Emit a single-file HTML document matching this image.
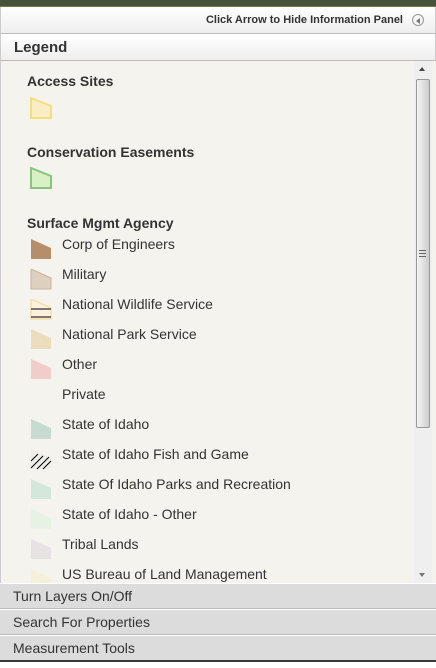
<!DOCTYPE html><html><head><style>
*{margin:0;padding:0;box-sizing:border-box}
body{width:436px;height:668px;overflow:hidden;background:#f4f3ed;font-family:"Liberation Sans",Arial,sans-serif;position:relative}
.top{position:absolute;left:0;top:0;width:436px;height:7px;background:#48513a;border-bottom:1px solid #6d7a55}
.hdr{position:absolute;left:0;top:7px;width:436px;height:27px;background:linear-gradient(#fff,#eee);border-bottom:1px solid #bbb;border-left:1px solid #ccc;border-right:1px solid #ccc}
.hdr span{position:absolute;right:32px;top:7px;font-size:11px;font-weight:bold;color:#333}
.hdr i{position:absolute;right:11px;top:7px;width:12px;height:12px;border:1px solid #999;border-radius:50%;background:#f6f6f6}
.hdr i:after{content:"";position:absolute;left:3px;top:2.5px;border-right:4px solid #777;border-top:3px solid transparent;border-bottom:3px solid transparent}
.leg{position:absolute;left:0;top:34px;width:436px;height:27px;background:linear-gradient(#fff,#eee);border-bottom:1px solid #bbb;border-left:1px solid #ccc;border-right:1px solid #ccc}
.leg span{position:absolute;left:13px;top:5px;font-size:15px;font-weight:bold;color:#333}
.cont{position:absolute;left:0;top:61px;width:432px;height:522px;border-left:1px solid #ccc}
h3{position:absolute;left:27px;font-size:14px;font-weight:bold;color:#333}
.it{position:absolute;left:62px;font-size:14px;color:#333}
svg.ic{position:absolute;left:30px}
.sb{position:absolute;left:414px;top:61px;width:18px;height:522px;background:#efefef}
.th{position:absolute;left:416px;top:79px;width:14px;height:349px;border:1px solid #999;border-radius:2px;background:linear-gradient(90deg,#f4f4f4,#ddd 60%,#ccc)}
.bt{position:absolute;left:0;width:436px;height:26px;background:#dcdcdc;border-top:1px solid #fff;border-bottom:1px solid #bbb;font-size:14px;color:#333;padding:4px 0 0 13px}
.bot{position:absolute;left:0;top:660px;width:436px;height:2px;background:#3a3a3a}
.wh{position:absolute;left:0;top:662px;width:436px;height:6px;background:#fff}
</style></head><body>
<div class="top"></div>
<div class="hdr"><span>Click Arrow to Hide Information Panel</span><i></i></div>
<div class="leg"><span>Legend</span></div>
<div class="cont"></div>
<h3 style="top:73px">Access Sites</h3>
<svg class="ic" style="top:97px" width="23" height="22"><polygon points="1,1 21,9 21,21 1,21" fill="#f8edc4" stroke="#f6df7a" stroke-width="2"/></svg>
<h3 style="top:144px">Conservation Easements</h3>
<svg class="ic" style="top:167px" width="23" height="23"><polygon points="1,1 21,9 21,21 1,21" fill="#d8f0c8" stroke="#86c57a" stroke-width="2"/></svg>
<h3 style="top:215px">Surface Mgmt Agency</h3>

<svg class="ic" style="top:239px" width="22" height="21"><polygon points="1,0 21,9 21,20 1,20" fill="#b58f6b"/></svg>
<div class="it" style="top:236px">Corp of Engineers</div>
<svg class="ic" style="top:269px" width="22" height="21"><polygon points="1,0 21,9 21,20 1,20" fill="#ddd0bf" stroke="#c8b49d"/></svg>
<div class="it" style="top:266px">Military</div>
<svg class="ic" style="top:299px" width="22" height="21"><polygon points="1,0 21,9 21,20 1,20" fill="#fbf1dc" stroke="#f3dfab" stroke-width="1.5"/><line x1="1" y1="10" x2="21" y2="10" stroke="#000"/><line x1="1" y1="18" x2="21" y2="18" stroke="#000"/></svg>
<div class="it" style="top:296px">National Wildlife Service</div>
<svg class="ic" style="top:329px" width="22" height="21"><polygon points="1,0 21,9 21,20 1,20" fill="#ecddbd"/></svg>
<div class="it" style="top:326px">National Park Service</div>
<svg class="ic" style="top:359px" width="22" height="21"><polygon points="1,0 21,9 21,20 1,20" fill="#f0cdcb"/></svg>
<div class="it" style="top:356px">Other</div>
<div class="it" style="top:386px">Private</div>
<svg class="ic" style="top:419px" width="22" height="21"><polygon points="1,0 21,9 21,20 1,20" fill="#c8dbd0"/></svg>
<div class="it" style="top:416px">State of Idaho</div>
<svg class="ic" style="top:449px" width="22" height="21"><polygon points="1,0 21,9 21,20 1,20" fill="#eeeee8"/><path d="M1,12 L8,5 M1,19 L13,7 M7,20 L19,8 M13,20 L21,12" stroke="#000" stroke-width="1"/></svg>
<div class="it" style="top:446px">State of Idaho Fish and Game</div>
<svg class="ic" style="top:479px" width="22" height="21"><polygon points="1,0 21,9 21,20 1,20" fill="#d3e8db"/></svg>
<div class="it" style="top:476px">State Of Idaho Parks and Recreation</div>
<svg class="ic" style="top:509px" width="22" height="21"><polygon points="1,0 21,9 21,20 1,20" fill="#e6f2e4"/></svg>
<div class="it" style="top:506px">State of Idaho - Other</div>
<svg class="ic" style="top:539px" width="22" height="21"><polygon points="1,0 21,9 21,20 1,20" fill="#e9e2e4"/></svg>
<div class="it" style="top:536px">Tribal Lands</div>
<svg class="ic" style="top:569px" width="22" height="14"><polygon points="1,0 21,9 21,20 1,20" fill="#f7f0d8"/></svg>
<div class="it" style="top:566px">US Bureau of Land Management</div>
<div class="sb"></div>
<div class="th"></div>
<div style="position:absolute;left:419px;top:67px;border-bottom:4px solid #444;border-left:3px solid transparent;border-right:3px solid transparent"></div>
<div style="position:absolute;left:419px;top:573px;border-top:4px solid #777;border-left:3px solid transparent;border-right:3px solid transparent"></div>
<div style="position:absolute;left:419px;top:250px;width:7px;height:7px;border-top:1px solid #666;border-bottom:1px solid #666;background:linear-gradient(transparent 2px,#666 2px,#666 3px,transparent 3px)"></div>
<div class="bt" style="top:583px">Turn Layers On/Off</div>
<div class="bt" style="top:609px">Search For Properties</div>
<div class="bt" style="top:635px">Measurement Tools</div>
<div class="bot"></div>
<div class="wh"></div>
</body></html>
